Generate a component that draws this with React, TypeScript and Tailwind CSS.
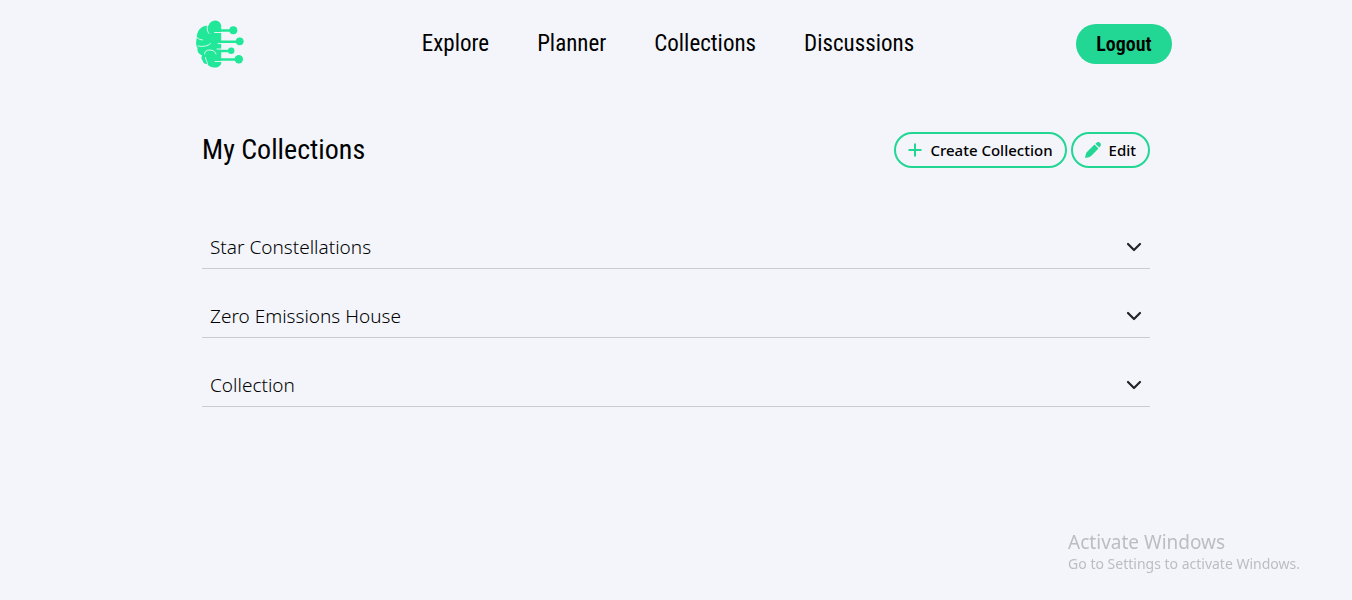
import { useState } from "react";

const navItems = ["Explore", "Planner", "Collections", "Discussions"];
const collections = ["Star Constellations", "Zero Emissions House", "Collection"];

function Logo() {
  return (
    <svg viewBox="0 0 48 48" className="size-12" aria-hidden="true">
      <g fill="#20e898">
        <path d="M12.500 5.700C13.500 2.500 16 .3 19.500.5c3.500.3 5.500 2.500 5.700 5.500V44c-1.500 2.500-4 3.800-7 3.600-3-.2-5.500-1.500-7-3.600-2.500.2-4.200-1-4.500-3.500C5.300 39.500 5 37.500 6 35.500 2.500 34 1 31.500 1.500 28-.5 25 0 21.500.8 18 .8 11 4.500 6.800 10 5.800z" />
        <circle cx="37.300" cy="10.300" r="4" />
        <circle cx="43.700" cy="21.300" r="3.900" />
        <circle cx="35.200" cy="30.800" r="3.200" />
        <circle cx="42.800" cy="39.300" r="4.200" />
      </g>
      <g fill="none" stroke="#20e898" strokeWidth="2.400">
        <path d="M24 10.500h13M24 21.700h19M24 31h10M24 39.500h18" />
      </g>
      <g fill="none" stroke="#f3f5fa" strokeWidth="0.900" strokeLinecap="round">
        <path d="M11.500 5.500c-1 3.500 0 6.500 1.500 8M18.500 12.500H26M1 17.500c1.500 1.600 3.500 2.500 5.500 2.400M2 26c4.500 1 10 .2 12.500-2.500M8.500 34c0-2.500 2-4 5-4 3.500 0 6 1.500 6.500 4M9.500 37.500c0 3 2 4 2 6.500M26 29h-5M26 41.500h-7M22 23.600h4" />
      </g>
    </svg>
  );
}

function PlusIcon() {
  return (
    <svg viewBox="0 0 14 14" className="size-3.5" fill="none" stroke="#22d693" strokeWidth="2" aria-hidden="true">
      <path d="M7 .5v13M.5 7h13" />
    </svg>
  );
}

function PencilIcon() {
  return (
    <svg viewBox="0 0 16 16" className="size-4" fill="#22d693" aria-hidden="true">
      <path d="M9.500 2.500l4 4-7.400 7.600c-.8.700-1.500 1-2.300 1.200L0 16l.9-4c.2-.9.600-1.600 1.300-2.300z" />
      <path d="M10.400 1.800l.9-.9c1.200-1.200 2.700-1.100 3.800-.1 1.100 1.100 1.100 2.600 0 3.700l-.9 1z" />
    </svg>
  );
}

function ChevronIcon({ open }: { open: boolean }) {
  return (
    <svg
      viewBox="0 0 16 16"
      className={open ? "size-4 rotate-180" : "size-4"}
      fill="none"
      stroke="#212529"
      strokeWidth="2.200"
      strokeLinecap="round"
      strokeLinejoin="round"
      aria-hidden="true"
    >
      <path d="M2 5l6 6 6-6" />
    </svg>
  );
}

export default function App() {
  const [openItem, setOpenItem] = useState<string | null>(null);

  return (
    <div className="min-h-screen bg-[#f3f5fa] font-['Noto_Sans','Open_Sans',sans-serif] text-black">
      <header className="mx-auto flex h-22 max-w-[992px] items-center justify-between font-['Roboto_Condensed',Roboto,sans-serif]">
        <a href="#" aria-label="Home" className="px-4">
          <Logo />
        </a>
        <nav className="flex gap-12 text-[23px] leading-8">
          {navItems.map((item) => (
            <a key={item} href="#">
              {item}
            </a>
          ))}
        </nav>
        <button type="button" className="h-10 w-24 rounded-full bg-[#22d693] text-xl font-semibold">
          Logout
        </button>
      </header>

      <main className="mx-auto max-w-[948px] pt-11">
        <div className="flex items-center justify-between">
          <h1 className="font-['Roboto_Condensed',Roboto,sans-serif] text-[28px] leading-9">
            My Collections
          </h1>
          <div className="flex gap-1 text-[15px] font-medium">
            <button
              type="button"
              className="flex h-9 items-center gap-2 rounded-full border-2 border-[#22d693] px-3"
            >
              <PlusIcon />
              Create Collection
            </button>
            <button
              type="button"
              className="flex h-9 items-center gap-2 rounded-full border-2 border-[#22d693] px-3"
            >
              <PencilIcon />
              Edit
            </button>
          </div>
        </div>

        <div className="mt-14 flex flex-col gap-6">
          {collections.map((name) => (
            <button
              key={name}
              type="button"
              aria-expanded={openItem === name}
              onClick={() => setOpenItem(openItem === name ? null : name)}
              className="flex h-[45px] items-center justify-between border-b border-[#c9cbcf] px-2 pt-0.5 text-left text-[19px] font-light"
            >
              {name}
              <ChevronIcon open={openItem === name} />
            </button>
          ))}
        </div>
      </main>

      <aside className="fixed right-[52px] bottom-[26px] text-[#bbbdc0]">
        <p className="text-[19px] leading-6">Activate Windows</p>
        <p className="text-sm leading-5">Go to Settings to activate Windows.</p>
      </aside>
    </div>
  );
}
